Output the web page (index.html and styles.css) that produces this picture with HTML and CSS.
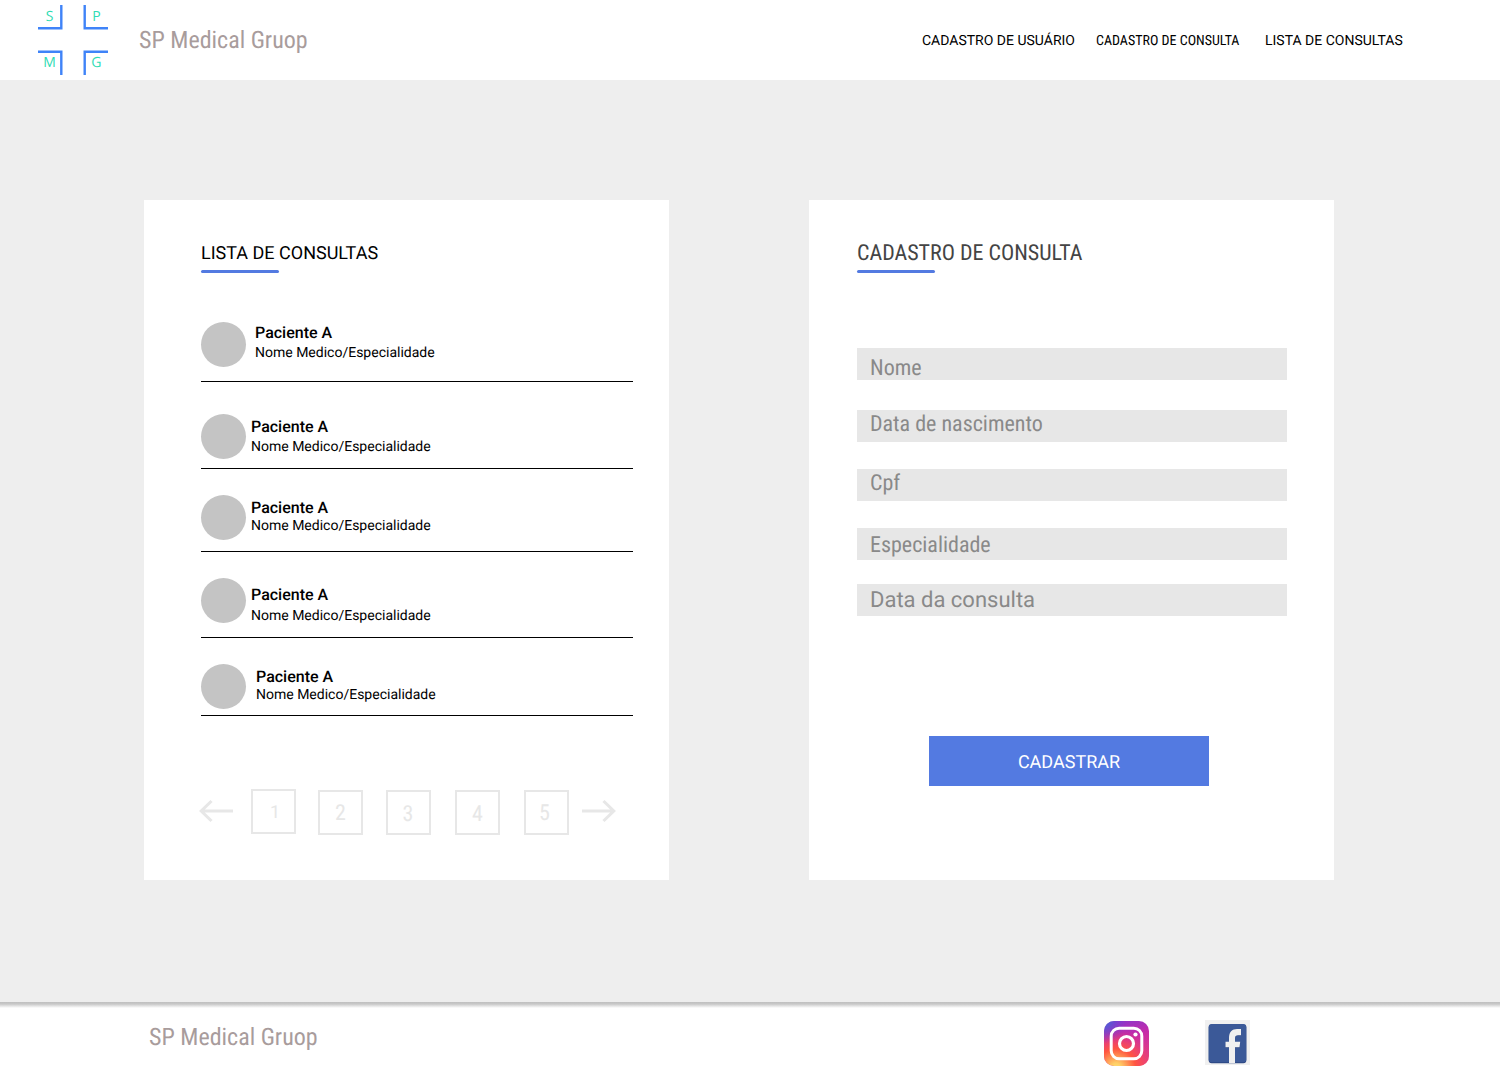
FILE: index.html
```html
<!DOCTYPE html>
<html lang="pt-BR">
<head>
<meta charset="utf-8">
<title>SP Medical Gruop</title>
<link rel="stylesheet" href="styles.css">
</head>
<body>
<header class="header">
  <svg class="logo" viewBox="0 0 70 70" width="70" height="70">
    <path class="logo-mark" d="M0 23.3H23.3V0M70 23.3H46.7V0M0 46.7H23.3V70M70 46.7H46.7V70"/>
    <text class="logo-letter" x="7.8" y="16">S</text>
    <text class="logo-letter" x="54.3" y="16">P</text>
    <text class="logo-letter" x="5.2" y="62.3">M</text>
    <text class="logo-letter" x="53.3" y="62.3">G</text>
  </svg>
  <span class="brand condensed">SP Medical Gruop</span>
  <nav class="nav">
    <a class="nav-user">CADASTRO DE USUÁRIO</a>
    <a class="nav-consult condensed">CADASTRO DE CONSULTA</a>
    <a class="nav-list">LISTA DE CONSULTAS</a>
  </nav>
</header>
<main class="main">
  <section class="card card-list">
    <h2 class="title title-list">LISTA DE CONSULTAS</h2>
    <ul class="rows">
      <li class="row row-1"><span class="avatar"></span><div class="info"><p class="name">Paciente A</p><p class="doctor">Nome Medico/Especialidade</p></div></li>
      <li class="row row-2"><span class="avatar"></span><div class="info"><p class="name">Paciente A</p><p class="doctor">Nome Medico/Especialidade</p></div></li>
      <li class="row row-3"><span class="avatar"></span><div class="info"><p class="name">Paciente A</p><p class="doctor">Nome Medico/Especialidade</p></div></li>
      <li class="row row-4"><span class="avatar"></span><div class="info"><p class="name">Paciente A</p><p class="doctor">Nome Medico/Especialidade</p></div></li>
      <li class="row row-5"><span class="avatar"></span><div class="info"><p class="name">Paciente A</p><p class="doctor">Nome Medico/Especialidade</p></div></li>
    </ul>
    <div class="pager">
      <svg class="arrow arrow-prev" width="34" height="24" viewBox="0 0 34 24"><path d="M12.5 2L2.2 12L12.5 22M2.2 12H34"/></svg>
      <span class="page page-1">1</span>
      <span class="page page-2 condensed">2</span>
      <span class="page page-3 condensed">3</span>
      <span class="page page-4 condensed">4</span>
      <span class="page page-5 condensed">5</span>
      <svg class="arrow arrow-next" width="34" height="24" viewBox="0 0 34 24"><path d="M21.5 2L31.8 12L21.5 22M31.8 12H0"/></svg>
    </div>
  </section>
  <section class="card card-form">
    <h2 class="title title-form condensed">CADASTRO DE CONSULTA</h2>
    <form class="form">
      <div class="field field-name condensed">Nome</div>
      <div class="field field-birth condensed">Data de nascimento</div>
      <div class="field field-cpf condensed">Cpf</div>
      <div class="field field-spec condensed">Especialidade</div>
      <div class="field field-date">Data da consulta</div>
      <button class="submit" type="button">CADASTRAR</button>
    </form>
  </section>
</main>
<footer class="footer">
  <span class="brand condensed">SP Medical Gruop</span>
  <div class="social">
    <svg width="45" height="45" viewBox="0 0 45 45">
      <defs>
        <linearGradient id="ig-base" x1="0.3" y1="0" x2="0.6" y2="1"><stop offset="0" stop-color="#8a35cc"/><stop offset=".4" stop-color="#c72ba8"/><stop offset="1" stop-color="#e8457a"/></linearGradient>
        <radialGradient id="ig-warm" cx=".27" cy="1.05" r=".9"><stop offset="0" stop-color="#ffdc70"/><stop offset=".12" stop-color="#ffd067"/><stop offset=".48" stop-color="#ff5540"/><stop offset=".68" stop-color="#f8485a" stop-opacity=".7"/><stop offset="1" stop-color="#d62f90" stop-opacity="0"/></radialGradient>
        <radialGradient id="ig-cool" cx="0" cy="0" r=".5"><stop offset="0" stop-color="#3a70d8"/><stop offset="1" stop-color="#7a3ad0" stop-opacity="0"/></radialGradient>
      </defs>
      <rect width="45" height="45" rx="10" fill="url(#ig-base)"/>
      <rect width="45" height="45" rx="10" fill="url(#ig-warm)"/>
      <rect width="45" height="45" rx="10" fill="url(#ig-cool)"/>
      <rect x="7.2" y="7.2" width="30.6" height="30.6" rx="8" fill="none" stroke="#fff" stroke-width="3"/>
      <circle cx="22.5" cy="22.5" r="7" fill="none" stroke="#fff" stroke-width="3.2"/>
      <circle cx="31.5" cy="13.5" r="2.1" fill="#fff"/>
    </svg>
    <svg class="facebook" width="45" height="45" viewBox="0 0 45 45">
      <rect width="45" height="45" fill="#f0f0f0"/>
      <rect x="3.7" y="4.5" width="37.6" height="38.7" rx="3" fill="#2d4782"/>
      <rect x="3.7" y="4" width="37.6" height="38.2" rx="3" fill="#3b5998"/>
      <path d="M24 43V28H20.5V22H24V18C24 12 27 9 32 9H36V16H33C31 16 30 16.5 30 18.5V22H35.2L34.5 28H30V43Z" fill="#2d4782"/>
      <path d="M24 43V27.3H20.5V21.7H24V18C24 12 27 9 32 9H36V15.2H33C31 15.2 30 16 30 18V21.7H35.2L34.5 27.3H30V43Z" fill="#f0f0f0"/>
    </svg>
  </div>
</footer>
</body>
</html>
```
FILE: styles.css
```css
* { box-sizing: border-box; margin: 0; padding: 0; }
body {
  width: 1500px;
  height: 1080px;
  overflow: hidden;
  background: #fff;
  color: #000;
  font-family: Roboto, sans-serif;
  text-rendering: geometricPrecision;
}
.condensed {
  font-family: "Roboto Condensed", Roboto, sans-serif;
  font-stretch: 75%;
}
.header { display: flex; align-items: center; height: 80px; padding-left: 38px; }
.logo { flex: none; }
.logo-mark { fill: none; stroke: #3f83f8; stroke-width: 2.4; }
.logo-letter { font: 14px "Open Sans", sans-serif; fill: #2fdcb4; }
.brand { font-size: 24px; line-height: 28px; color: #a89c9c; white-space: nowrap; }
.header .brand { width: 783px; margin-left: 31px; }
.nav { display: flex; padding-top: 2px; font-size: 14px; line-height: 16px; white-space: nowrap; }
.nav-user { width: 174px; }
.nav-consult { width: 169px; }
.main { display: flex; align-items: flex-start; gap: 140px; height: 922px; padding: 120px 0 0 144px; background: #eee; }
.card { width: 525px; height: 680px; background: #fff; }
.card-list { padding: 40px 36px 0 57px; }
.card-form { padding: 40px 47px 0 48px; }
.title { height: 33px; padding-top: 1px; line-height: 26px; font-weight: 400; white-space: nowrap; }
.title::after { content: ""; display: block; width: 78px; height: 3px; margin-top: 3px; border-radius: 2px; background: #537ae1; }
.title-list { font-size: 18px; }
.title-form { font-size: 22px; color: #444; }
.rows { margin-top: 49px; list-style: none; }
.row { display: flex; margin-top: 26px; border-bottom: 1px solid #000; }
.avatar { flex: none; width: 45px; height: 45px; border-radius: 50%; background: #c4c4c4; }
.info { margin-left: 5px; padding-top: 3px; white-space: nowrap; }
.name { height: 20px; font-size: 16px; line-height: 20px; font-weight: 500; }
.doctor { padding-top: 1px; font-size: 14px; line-height: 18px; }
.row-1 { height: 60px; margin-top: 0; }
.row-1 .info { margin-left: 9px; padding-top: 1px; }
.row-2 { height: 55px; margin-top: 32px; }
.row-3 { height: 57px; }
.row-3 .name, .row-5 .name { height: 18px; }
.row-4 { height: 60px; }
.row-4 .info { padding-top: 7px; }
.row-4 .name { height: 21px; }
.row-5 { height: 52px; }
.row-5 .info { margin-left: 10px; }
.pager { display: flex; margin: 73px -10px 0 -2px; }
.arrow { flex: none; margin-top: 10px; fill: none; stroke: #e7e7e7; stroke-width: 3; }
.page { flex: none; width: 45px; height: 45px; margin-top: 1px; border: 2px solid #e7e7e7; color: #e7e7e7; font-size: 22px; line-height: 43px; text-align: center; }
.page-1 { margin: 0 22px 0 18px; font-size: 18px; padding-left: 3px; }
.page-2 { margin-right: 23px; }
.page-3 { margin-right: 24px; line-height: 45px; padding-right: 1px; }
.page-4 { margin-right: 24px; line-height: 45px; }
.page-5 { padding-right: 4px; }
.arrow-next { margin-left: 13px; }
.form { display: flex; flex-direction: column; margin-top: 75px; }
.field { height: 32px; padding-left: 13px; background: #e7e7e7; color: #898989; font-size: 22px; line-height: 26px; white-space: nowrap; }
.field-name { padding-top: 8px; }
.field-birth { margin-top: 30px; padding-top: 2px; }
.field-cpf { margin-top: 27px; padding-top: 2px; }
.field-spec { margin-top: 27px; padding-top: 5px; }
.field-date { margin-top: 24px; padding-top: 4px; }
.submit { width: 280px; height: 50px; margin: 120px 0 0 72px; padding-top: 4px; border: 0; background: #537ae1; color: #fff; font: 18px/46px Roboto, sans-serif; text-rendering: inherit; }
.footer { display: flex; align-items: flex-start; height: 78px; padding-left: 149px; background: linear-gradient(#bfbfbf, #c8c8c8 2px, #fff 6px); }
.footer .brand { width: 955px; margin-top: 21px; }
.social { display: flex; gap: 56px; margin-top: 19px; }
.facebook { margin-top: -1px; }
```
